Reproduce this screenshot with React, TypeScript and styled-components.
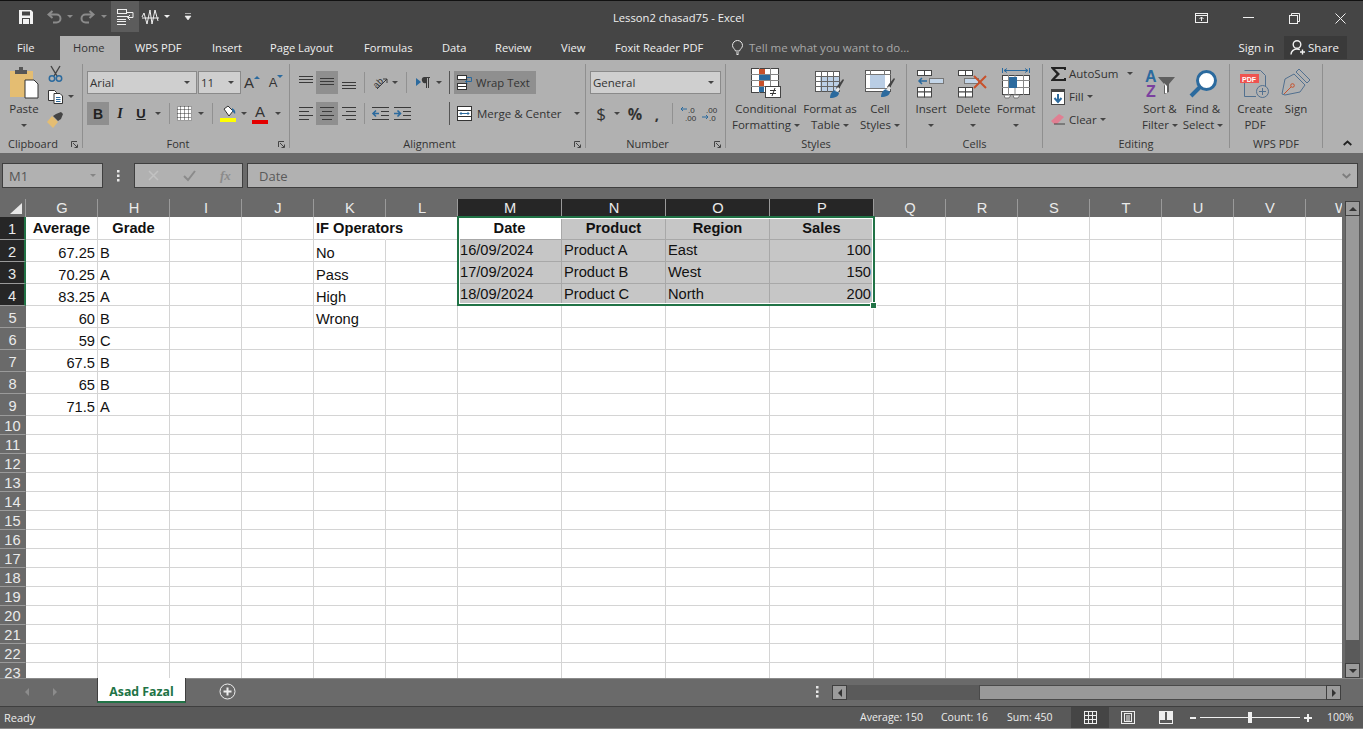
import React from "react";
import styled, { createGlobalStyle } from "styled-components";

const Global = createGlobalStyle`
  html, body { margin: 0; padding: 0; background: #6a6a6a; overflow: hidden; }
  * { box-sizing: border-box; }
  svg { display: block; flex: none; overflow: visible; }
`;
const UI = `"Open Sans", "Noto Sans", sans-serif`;
const ARIAL = `"Liberation Sans", Arial, sans-serif`;
const INK = "#2b2b2b";

const Root = styled.div`
  width: 1363px; height: 729px; display: flex; flex-direction: column; overflow: hidden;
  font-family: ${UI}; font-size: 11.5px; color: ${INK}; background: #6a6a6a;
`;
const TitleBar = styled.header`
  height: 36px; flex: none; background: #454545; border-top: 1px solid #111; display: flex; align-items: flex-start;
  color: #f0f0f0; padding-left: 15px; position: relative;
`;
const QatBtn = styled.div<{ $w: number; $on?: boolean }>`
  width: ${p => p.$w}px; height: 31px; display: flex; align-items: center; justify-content: center; flex: none;
  background: ${p => (p.$on ? "#5c5c5c" : "transparent")};
`;
const Title = styled.div`
  position: absolute; left: 613px; top: 9px; font-size: 11.2px; line-height: 16px; white-space: nowrap;
`;
const WinBtns = styled.div`margin-left: auto; display: flex;`;
const WinBtn = styled.div`width: 46px; height: 34px; display: flex; align-items: center; justify-content: center;`;

const TabRow = styled.nav`
  height: 24px; flex: none; background: #454545; display: flex; align-items: stretch; color: #f0f0f0;
`;
const RibTab = styled.div<{ $w: number; $pl?: number; $on?: boolean }>`
  width: ${p => p.$w}px; padding-left: ${p => p.$pl ?? 0}px; line-height: 23px; white-space: nowrap; flex: none;
  font-size: 11.15px;
  background: ${p => (p.$on ? "#b1b1b1" : "transparent")}; color: ${p => (p.$on ? "#333" : "#f0f0f0")};
`;
const TellMe = styled.div`
  display: flex; align-items: center; gap: 6px; color: #a8a8a8; font-size: 11.5px; width: 500px; height: 23px;
  flex: none; white-space: nowrap;
`;
const TabEnd = styled.div`margin-left: auto; display: flex; align-items: center; height: 23px; padding-right: 16px;`;
const SignIn = styled.div`margin-right: 10px; white-space: nowrap;`;
const ShareBtn = styled.div`
  width: 63px; height: 23px; background: #3a3a3a; display: flex; align-items: center; gap: 2px; padding-left: 6px; white-space: nowrap;
`;

const Ribbon = styled.section`
  height: 93px; flex: none; background: #b1b1b1; display: flex; padding-top: 4px;
`;
const Group = styled.div<{ $w: number }>`
  width: ${p => p.$w}px; height: 84px; flex: none; border-right: 1px solid #8f8f8f; display: flex; flex-direction: column;
`;
const Body = styled.div<{ $pl?: number }>`height: 72px; flex: none; display: flex; padding-left: ${p => p.$pl ?? 0}px;`;
const Stack = styled.div<{ $pl?: number }>`
  height: 72px; flex: none; display: flex; flex-direction: column; padding-top: 7px; gap: 8px; padding-left: ${p => p.$pl ?? 0}px;
`;
const Foot = styled.div`height: 16px; flex: none; display: flex; align-items: center; line-height: 16px;`;
const FootText = styled.div`flex: 1; text-align: center; font-size: 11px; color: #333; white-space: nowrap;`;
const Launcher = styled.div`width: 16px; flex: none; display: flex; justify-content: flex-start; padding-left: 5px;`;

const Row = styled.div`height: 23px; display: flex; align-items: center; flex: none;`;
const Slot = styled.div<{ $w: number; $on?: boolean }>`
  width: ${p => p.$w}px; height: 23px; flex: none; display: flex; align-items: center; justify-content: center;
  background: ${p => (p.$on ? "#8f8f8f" : "transparent")};
`;
const Sep = styled.div`width: 1px; height: 21px; background: #919191;`;
const TallSep = styled.div`width: 1px; height: 23px; background: #555;`;
const Caret = styled.i<{ $c?: string; $ml?: number }>`
  display: inline-block; width: 0; height: 0; flex: none; border-left: 3px solid transparent; border-right: 3px solid transparent;
  border-top: 3px solid ${p => p.$c ?? "#444"}; margin-left: ${p => p.$ml ?? 0}px; vertical-align: middle;
`;
const Combo = styled.div<{ $w: number }>`
  width: ${p => p.$w}px; height: 23px; flex: none; background: #cfcfcf; border: 1px solid #8a8a8a; display: flex; align-items: center;
  justify-content: space-between; padding: 0 6px 0 2px; font-size: 11.5px; color: #333;
`;
const Gap = styled.div<{ $w: number }>`width: ${p => p.$w}px; flex: none;`;
const FaceB = styled.span`font: bold 14px ${ARIAL}; color: #222;`;
const FaceI = styled.span`font: italic bold 14px "Liberation Serif", serif; color: #222;`;
const FaceU = styled.span`font: bold 13px ${ARIAL}; color: #222; text-decoration: underline;`;
const NumSign = styled.span<{ $s?: number; $bold?: boolean }>`
  font: ${p => (p.$bold ? "700 " : "")}${p => p.$s ?? 15}px ${UI}; color: #333; line-height: 20px;
`;
const StepBox = styled.div`display: flex; align-items: flex-start; height: 18px;`;
const StepA = styled.span<{ $s: number }>`font: ${p => p.$s}px/18px ${ARIAL}; color: #333;`;
const WrapBtn = styled.div`
  width: 82px; height: 23px; flex: none; background: #8f8f8f; display: flex; align-items: center; gap: 4px; padding-left: 3px; white-space: nowrap; color: #333;
  font-size: 11.3px;
`;
const MergeBtn = styled.div`display: flex; align-items: center; gap: 5px; padding-left: 5px; white-space: nowrap; color: #333;`;
const ColorBox = styled.div`width: 16px; display: flex; flex-direction: column; align-items: center; height: 20px;`;
const ColorA = styled.span`font: 15px/16px ${ARIAL}; color: #333; height: 16px;`;
const ColorBar = styled.div<{ $c: string }>`width: 16px; height: 4px; background: ${p => p.$c};`;

const Big = styled.div<{ $w: number }>`
  width: ${p => p.$w}px; flex: none; display: flex; flex-direction: column; align-items: center; height: 72px; line-height: 16px;
  white-space: nowrap; color: #333;
`;
const BigIcon = styled.div`height: 37px; display: flex; align-items: flex-end; justify-content: center; padding-bottom: 3px;`;
const BigLine = styled.div`height: 16px; display: flex; align-items: center; gap: 3px;`;
const Column = styled.div<{ $w: number }>`width: ${p => p.$w}px; flex: none; display: flex; flex-direction: column; margin-top: -2px;`;
const ToolRow = styled.div`height: 23px; display: flex; align-items: center; white-space: nowrap; color: #333;`;
const ToolIcon = styled.div`width: 22px; flex: none; display: flex; justify-content: center;`;
const Collapse = styled.div`flex: 1; height: 84px; display: flex; align-items: flex-end; padding: 0 0 2px 20px;`;

const FormulaBar = styled.div`
  height: 46px; flex: none; background: #6a6a6a; padding: 10px 5px 0 2px; display: flex; align-items: flex-start;
`;
const NameBox = styled.div`
  width: 101px; height: 25px; background: #b1b1b1; border: 1px solid #3f3f3f; display: flex; align-items: center; justify-content: space-between;
  padding: 0 6px 0 6px; color: #555; font-size: 13px;
`;
const Kebab = styled.div`width: 31px; height: 25px; display: flex; align-items: center; justify-content: center;`;
const FxBox = styled.div`
  width: 109px; height: 25px; background: #b1b1b1; border: 1px solid #3f3f3f; display: flex; align-items: center; padding-left: 13px; gap: 24px;
  color: #8b8b8b; margin-right: 4px;
`;
const FxText = styled.span`font: italic bold 13px "Liberation Serif", serif; color: #8b8b8b;`;
const FormulaInput = styled.div`
  flex: 1; height: 25px; background: #b1b1b1; border: 1px solid #3f3f3f; display: flex; align-items: center; justify-content: space-between;
  padding: 0 6px 0 11px; color: #5a5a5a; font-size: 13px;
`;

const SheetRow = styled.div`height: 479px; flex: none; display: flex; background: #6a6a6a;`;
const GridWrap = styled.div`width: 1342px; height: 479px; position: relative; overflow: hidden; flex: none;`;
const Grid = styled.div`
  display: grid; width: 1378px;
  grid-template-columns: 26px repeat(6, 72px) repeat(4, 104px) repeat(7, 72px);
  grid-template-rows: 18px 23px repeat(8, 22px) repeat(14, 19px);
  font: 14.67px ${ARIAL}; color: #111;
`;
const Corner = styled.div`background: #6a6a6a; border-right: 1px solid #9a9a9a; display: flex; justify-content: flex-end; align-items: flex-end; padding: 0 3px 3px 0;`;
const ColHead = styled.div<{ $sel?: boolean }>`
  background: ${p => (p.$sel ? "#262626" : "#6a6a6a")}; color: #eaeaea; border-right: 1px solid #9a9a9a; text-align: center; line-height: 18px; font-size: 14.67px;
  padding-left: 1px;
`;
const RowHead = styled.div<{ $sel?: boolean; $pt: number }>`
  background: ${p => (p.$sel ? "#262626" : "#6a6a6a")}; color: #eaeaea; border-bottom: 1px solid #9a9a9a; text-align: center;
  border-right: ${p => (p.$sel ? "2px solid #217346" : "1px solid #6a6a6a")}; line-height: 19px; font-size: 14.67px; padding-top: ${p => p.$pt}px; overflow: hidden;
`;
const Cell = styled.div<{ $align?: string; $bold?: boolean; $sel?: boolean; $white?: boolean; $over?: boolean; $pt: number }>`
  background: ${p => (p.$sel && !p.$white ? "#c6c6c6" : "#fff")};
  border-right: 1px solid ${p => (p.$over ? "transparent" : p.$sel ? "#a8a8a8" : "#d4d4d4")};
  border-bottom: 1px solid ${p => (p.$sel ? "#a8a8a8" : "#d4d4d4")};
  text-align: ${p => p.$align ?? "left"}; font-weight: ${p => (p.$bold ? 700 : 400)};
  padding: ${p => p.$pt}px 2px 0; line-height: 21px; white-space: nowrap;
  overflow: visible; ${p => (p.$over ? "position: relative; z-index: 1;" : "")}
`;
const Selection = styled.div`
  position: absolute; z-index: 2; left: 457px; top: 17px; width: 418px; height: 90px; border: 2px solid #217346;
  box-shadow: inset 0 0 0 1px #fff; pointer-events: none;
`;
const Handle = styled.div`position: absolute; right: -3px; bottom: -4px; width: 5px; height: 5px; background: #217346; outline: 1px solid #fff;`;

const VScroll = styled.div`width: 15px; margin-left: 3px; height: 477px; margin-top: 2px; display: flex; flex-direction: column; flex: none;`;
const VBtn = styled.div`height: 15px; flex: none; background: #9b9b9b; border: 1px solid #3f3f3f; display: flex; align-items: center; justify-content: center;`;
const VThumb = styled.div`height: 424px; background: #999; flex: none; border-left: 1px solid #5a5a5a; border-right: 1px solid #5a5a5a;`;
const VTrack = styled.div`flex: 1; background: #5a5a5a;`;

const SheetBar = styled.div`
  height: 29px; flex: none; background: #6a6a6a; border-bottom: 1px solid #3f3f3f; display: flex; align-items: flex-start; border-top: 1px solid #8a8a8a;
`;
const Nav = styled.div`width: 97px; height: 25px; display: flex; align-items: center; padding-left: 24px; gap: 22px; flex: none;`;
const SheetTab = styled.div`
  width: 89px; height: 25px; margin-top: -1px; background: #fff; border-bottom: 2px solid #217346; border-left: 1px solid #3f3f3f; border-right: 1px solid #3f3f3f;
  text-align: center; font-weight: 700; color: #217346; font-size: 12.3px; line-height: 27px; flex: none; white-space: nowrap;
`;
const AddSlot = styled.div`width: 82px; height: 25px; display: flex; align-items: center; justify-content: center; flex: none;`;
const BarDots = styled.div`margin-left: auto; width: 30px; height: 25px; display: flex; align-items: center; justify-content: center; flex: none;`;
const HScroll = styled.div`width: 509px; height: 15px; margin: 6px 22px 0 0; flex: none; display: flex; background: #5a5a5a;`;
const HBtn = styled.div`width: 15px; height: 15px; background: #9b9b9b; border: 1px solid #3f3f3f; display: flex; align-items: center; justify-content: center; flex: none;`;
const HTrack = styled.div`width: 132px; flex: none;`;
const HThumb = styled.div`flex: 1; background: #999; border-top: 1px solid #4a4a4a; border-bottom: 1px solid #4a4a4a; border-left: 1px solid #4a4a4a;`;

const StatusBar = styled.footer`
  height: 22px; flex: none; background: #595959; border-bottom: 1px solid #8a8a8a; display: flex; align-items: stretch; color: #ececec; font-size: 11px; line-height: 21px;
`;
const Ready = styled.div`padding-left: 4px; width: 860px; flex: none;`;
const Stat = styled.div<{ $w: number }>`width: ${p => p.$w}px; flex: none; white-space: nowrap; font-size: 10.5px;`;
const ViewBtn = styled.div<{ $on?: boolean }>`
  width: 38px; flex: none; display: flex; align-items: center; justify-content: center; background: ${p => (p.$on ? "#454545" : "transparent")};
`;
const ZoomGlyph = styled.div<{ $w: number }>`width: ${p => p.$w}px; flex: none; display: flex; align-items: center; justify-content: center;`;
const Slider = styled.div`width: 100px; flex: none; position: relative; display: flex; align-items: center;`;
const SliderLine = styled.div`width: 100%; height: 1px; background: #f0f0f0;`;
const SliderThumb = styled.div`position: absolute; left: 48px; top: 5px; width: 4px; height: 11px; background: #f0f0f0;`;
const Percent = styled.div`flex: none; padding-left: 11px; white-space: nowrap; font-size: 10.5px;`;

/* ---- icons ---- */
const D = "#3a3a3a";
const B = "#2b6a9e";
const SaveIcon = () => (
  <svg width="14" height="14" viewBox="0 0 14 14"><path d="M0 0h12l2 2v12H0z" fill="#f2f2f2" /><rect x="3" y="1.5" width="8" height="4" fill="#454545" /><rect x="3" y="8" width="8" height="6" fill="#454545" /><rect x="4" y="9" width="6" height="5" fill="#f2f2f2" /></svg>
);
const UndoIcon = ({ flip }: { flip?: boolean }) => (
  <svg width="15" height="13" viewBox="0 0 15 13" style={flip ? { transform: "scaleX(-1)" } : undefined}><path d="M5.5 1 1.5 4.5l4 3.5M2 4.5h7.5a4 4 0 0 1 0 8H6" fill="none" stroke="#8b8b8b" strokeWidth="2" /></svg>
);
const WrapQat = () => (
  <svg width="17" height="16" viewBox="0 0 17 16" fill="none" stroke="#f0f0f0"><rect x=".5" y=".5" width="9" height="4" /><path d="M0 7.5h12M0 10.5h9M0 15.5h9M0 12.5h9" /><path d="M9 3.5h7v5h-5M13 6l-2.5 2.5L13 11" /></svg>
);
const ZigIcon = () => (
  <svg width="17" height="16" viewBox="0 0 17 16" fill="none" stroke="#f0f0f0"><path d="M0 8l2-4 3 11 3-14 2 14 3-14 3 11M0 9h17" /></svg>
);
const CustomizeIcon = () => (
  <svg width="6" height="8" viewBox="0 0 6 8"><path d="M0 .5h6M0 3h6L3 7z" fill="#f0f0f0" stroke="#f0f0f0" strokeWidth=".6" /></svg>
);
const RibbonOpt = () => (
  <svg width="14" height="11" viewBox="0 0 14 11" fill="none" stroke="#f0f0f0"><rect x=".5" y=".5" width="12" height="9" /><path d="M0 2.5h13" /><path d="M6.5 8V4M4.5 6l2-2 2 2" /></svg>
);
const MinIcon = () => <svg width="11" height="2" viewBox="0 0 11 2"><rect width="11" height="1" fill="#f0f0f0" /></svg>;
const RestoreIcon = () => (
  <svg width="11" height="11" viewBox="0 0 11 11" fill="none" stroke="#f0f0f0"><rect x=".5" y="2.5" width="8" height="8" /><path d="M2.5 2.5v-2h8v8h-2" /></svg>
);
const CloseIcon = () => (
  <svg width="11" height="11" viewBox="0 0 11 11"><path d="M.5.5l10 10M10.5.5l-10 10" stroke="#f0f0f0" /></svg>
);
const BulbIcon = () => (
  <svg width="11" height="14" viewBox="0 0 11 14" fill="none" stroke="#e8e8e8"><path d="M3.5 10C3 8 .5 7 .5 4.5a5 5 0 0 1 10 0C10.5 7 8 8 7.500 10zM4 12h3M4.500 13.500h2" /></svg>
);
const ShareIcon = () => (
  <svg width="16" height="15" viewBox="0 0 16 15" fill="none" stroke="#f0f0f0" strokeWidth="1.4"><circle cx="7" cy="4.500" r="3.800" /><path d="M1 14.500c0-3 2.500-5.500 6-5.500 1 0 2 .2 2.800.6M12.500 9.500v5M10 12h5" /></svg>
);
const PasteIcon = () => (
  <svg width="30" height="31" viewBox="0 0 30 31"><rect x="1" y="4" width="23" height="26" fill="#e4bd72" /><path d="M6 7V3h4V0h4v3h4v4z" fill="#565656" /><path d="M16 13h9l4 4v14H16z" fill="#fff" stroke="#333" /></svg>
);
const CutIcon = () => (
  <svg width="15" height="16" viewBox="0 0 15 16" fill="none"><path d="M3 0l6 10M12 0L6 10" stroke="#444" strokeWidth="1.4" /><circle cx="4" cy="12.500" r="2.700" stroke={B} strokeWidth="1.500" /><circle cx="11" cy="12.500" r="2.700" stroke={B} strokeWidth="1.500" /></svg>
);
const CopyIcon = () => (
  <svg width="15" height="14" viewBox="0 0 15 14" fill="#fff" stroke="#333"><path d="M.5.500h6l2 2v8h-8z" /><path d="M6 3.500h6l2.500 2.500v7.500H6z" /><path d="M8 7.500h4.500M8 9.500h4.500M8 11.500h4.500" stroke={B} /></svg>
);
const PainterIcon = () => (
  <svg width="16" height="16" viewBox="0 0 16 16"><path d="M0 10l5-6 6 6-5 6z" fill="#e4bd72" /><path d="M6 4l3-2 5-2 2 2-2 5-3 2z" fill="#444" /></svg>
);
const FontStep = ({ up }: { up?: boolean }) => (
  <StepBox>
    <StepA $s={up ? 15 : 13}>A</StepA>
    <svg width="6" height="4" viewBox="0 0 6 4" style={{ marginTop: 1 }}><path d={up ? "M0 4l3-3 3 3z" : "M0 0h6L3 3z"} fill={B} /></svg>
  </StepBox>
);
const BorderIcon = () => (
  <svg width="15" height="15" viewBox="0 0 15 15"><rect width="15" height="15" fill="#fff" /><path d="M.5.500h14v14H.5zM7.500.5v14M.5 7.500h14M3.500.5v14M11.500.5v14M.5 3.500h14M.5 11.500h14" fill="none" stroke="#222" strokeDasharray="1 1" strokeWidth=".9" /></svg>
);
const FillColorIcon = () => (
  <svg width="17" height="17" viewBox="0 0 17 17"><path d="M4 4l4-3 5 5-4 5z" fill="#fff" stroke="#333" /><path d="M12 3c2 1 4 3 3 6l-3-3z" fill={B} /><rect y="13" width="16" height="4" fill="#ffff00" /></svg>
);
const AlignLines = ({ mode, w = 14 }: { mode: "l" | "c" | "r" | "top" | "mid" | "bot"; w?: number }) => {
  const ys = mode === "top" ? [0, 3, 6] : mode === "bot" ? [6, 9, 12] : mode === "mid" ? [2, 5, 8] : [0, 4, 8, 12];
  const short = ["l", "c", "r"].includes(mode);
  return (
    <svg width={w} height="13" viewBox={`0 0 ${w} 13`}>
      {ys.map((y, i) => {
        const len = short && i % 2 ? 10 : w;
        const x = mode === "r" ? w - len : mode === "c" ? (w - len) / 2 : 0;
        return <rect key={y} x={x} y={y} width={len} height="1" fill="#3a3a3a" />;
      })}
    </svg>
  );
};
const IndentIcon = ({ inward }: { inward?: boolean }) => (
  <svg width="17" height="13" viewBox="0 0 17 13">
    <path d="M0 .5h17M0 12.500h17M9 4.500h8M9 8.500h8" stroke={D} />
    {inward
      ? <path d="M0 6.500h6M3.500 3.500l3 3-3 3" stroke={B} strokeWidth="1.600" fill="none" />
      : <path d="M1 6.500h6M4 3.500l-3 3 3 3" stroke={B} strokeWidth="1.600" fill="none" />}
  </svg>
);
const OrientIcon = () => (
  <svg width="17" height="15" viewBox="0 0 17 15"><text x="1" y="11" fontFamily={ARIAL} fontSize="9" fill="#333" transform="rotate(-45 6 8)">ab</text><path d="M5 14L15 4M15 4h-4M15 4v4" stroke={D} fill="none" /></svg>
);
const RtlIcon = () => (
  <svg width="15" height="11" viewBox="0 0 15 11"><path d="M0 1l5 4-5 4z" fill={B} /><path d="M8 0h6v1h-1v10h-1V1h-1v10h-1V6a3 3 0 0 1-2-6z" fill={D} /></svg>
);
const WrapIcon = () => (
  <svg width="15" height="15" viewBox="0 0 15 15" fill="#fff" stroke="#333"><rect x=".5" y=".5" width="9" height="4" /><rect x=".5" y="8.500" width="9" height="6" /><path d="M.5 11.500h9" /><path d="M10 2.500h4.500v4h-6M10.500 4.500l-2 2 2 2" fill="none" stroke={B} /></svg>
);
const MergeIcon = () => (
  <svg width="15" height="15" viewBox="0 0 15 15"><rect x=".5" y=".5" width="14" height="14" fill="#fff" stroke="#333" /><path d="M0 4.500h15M0 10.500h15" stroke="#333" /><path d="M3 7.500h9M4.500 6l-1.500 1.500L4.500 9M10.500 6l1.500 1.500L10.500 9" stroke={B} fill="none" /></svg>
);
const DecIcon = ({ more }: { more?: boolean }) => (
  <svg width="15" height="15" viewBox="0 0 15 15">
    <text x={more ? 4 : 7} y="6.500" fontFamily={ARIAL} fontSize="8" fill="#333">{more ? ".00" : ".0"}</text>
    <text x={more ? 7 : 4} y="14.500" fontFamily={ARIAL} fontSize="8" fill="#333">{more ? ".0" : ".00"}</text>
    {more ? <path d="M0 11h6M4 9l2 2-2 2" stroke={B} fill="none" /> : <path d="M0 3h6M2 1L0 3l2 2" stroke={B} fill="none" />}
  </svg>
);
const Launch = () => (
  <svg width="7" height="7" viewBox="0 0 7 7" fill="none" stroke="#444"><path d="M.5 6V.5H6M2 2l4 4M3.500 6.500h3v-3" /></svg>
);
const CondIcon = () => (
  <svg width="30" height="30" viewBox="0 0 30 30">
    <rect x=".5" y=".5" width="27" height="24" fill="#fff" stroke="#444" />
    <path d="M8.500 0v25M19.500 0v25M0 6.500h28M0 12.500h28M0 18.500h28" stroke="#888" />
    <rect x="8" y="1" width="6" height="5" fill="#c8512b" /><rect x="8" y="7" width="11" height="5" fill={B} /><rect x="8" y="13" width="5" height="5" fill="#c8512b" /><rect x="8" y="19" width="5" height="5" fill={B} />
    <rect x="14.500" y="18.500" width="15" height="11" fill="#fff" stroke="#444" />
    <path d="M19 22.500h6M19 25.500h6M24 20l-3 8" stroke="#333" fill="none" />
  </svg>
);
const BrushTail = ({ x = 0 }: { x?: number }) => (
  <g transform={`translate(${x} 0)`}>
    <path d="M15 27c0-5 3-8 6-8l3 3c0 3-4 5-9 5z" fill={B} />
    <path d="M21 17l2-3 5-6 1 1-4 7-2 3z" fill="#444" />
    <path d="M20 20l3-4 2 2-2 3z" fill="#e8e8e8" />
  </g>
);
const FormatTableIcon = () => (
  <svg width="30" height="27" viewBox="0 0 30 27">
    <rect x=".5" y=".5" width="24" height="20" fill="#fff" stroke="#555" />
    <rect x="5" y="5" width="19" height="15" fill="#bcd0e6" />
    <path d="M6.500 0v21M12.500 0v21M18.500 0v21M0 5.500h25M0 10.500h25M0 15.500h25" stroke="#666" />
    <BrushTail />
  </svg>
);
const CellStyleIcon = () => (
  <svg width="30" height="28" viewBox="0 0 30 28">
    <rect x=".5" y=".5" width="25" height="21" fill="#fff" stroke="#555" />
    <path d="M0 4.500h26M5.500 0v5M19.500 0v5M0 18.500h26" stroke="#777" />
    <rect x="5" y="5" width="15" height="13" fill="#b9cde4" />
    <BrushTail x={1} />
  </svg>
);
const SmallTable = ({ x, y, r = 1 }: { x: number; y: number; r?: number }) => (
  <g fill="#fff" stroke="#444">
    <rect x={x + .5} y={y + .5} width="7" height={r === 2 ? 4.500 : 5} />
    <rect x={x + 7.500} y={y + .5} width="7" height={r === 2 ? 4.500 : 5} />
    {r === 2 && <><rect x={x + .5} y={y + 5} width="7" height="5" /><rect x={x + 7.500} y={y + 5} width="7" height="5" /></>}
  </g>
);
const InsertIcon = () => (
  <svg width="28" height="28" viewBox="0 0 28 28">
    <SmallTable x={0} y={0} /><SmallTable x={0} y={17} r={2} />
    <rect x="12.500" y="8.500" width="14" height="5" fill="#c3d5e8" stroke="#777" />
    <path d="M10 11H2M5 8l-3 3 3 3" stroke={B} strokeWidth="1.500" fill="none" />
  </svg>
);
const DeleteIcon = () => (
  <svg width="30" height="28" viewBox="0 0 30 28">
    <SmallTable x={0} y={0} /><SmallTable x={0} y={17} r={2} />
    <rect x="6.500" y="8.500" width="14" height="5" fill="#c3d5e8" stroke="#777" />
    <path d="M16 6l12 12M28 6L16 18" stroke="#c8512b" strokeWidth="2" />
  </svg>
);
const FormatCellIcon = () => (
  <svg width="28" height="30" viewBox="0 0 28 30">
    <path d="M.5 0v5M27.500 0v5M2 2.500h24M5 .5l-3 2 3 2M23 .5l3 2-3 2" stroke={B} fill="none" />
    <rect x=".5" y="7.500" width="27" height="19" fill="#fff" stroke="#444" />
    <path d="M6.500 7v20M21.500 7v20M13 7v20M0 12.500h28M0 19.500h28" stroke="#888" />
    <rect x="7" y="9" width="8" height="11" fill={B} />
    <path d="M2 27h7l-2 3H3zM11 27h7l-2 3h-4z" fill="#fff" stroke="#777" />
  </svg>
);
const SigmaIcon = () => <svg width="15" height="14" viewBox="0 0 15 14"><path d="M0 0h15v3h-2V2H4l5 5-5 5h9v-1h2v3H0v-1l5.500-6L0 1z" fill="#222" /></svg>;
const FillDownIcon = () => (
  <svg width="14" height="16" viewBox="0 0 14 16"><rect x=".5" y=".5" width="13" height="15" fill="#fff" stroke="#444" /><rect width="14" height="3" fill="#444" /><path d="M7 5v8M3.500 9L7 13l3.500-4" stroke={B} strokeWidth="2" fill="none" /></svg>
);
const EraserIcon = () => (
  <svg width="14" height="13" viewBox="0 0 14 13"><path d="M0 8l8-7 5 3-7 7H3z" fill="#e07f92" /><path d="M3 11h11" stroke="#444" /></svg>
);
const SortIcon = () => (
  <svg width="30" height="29" viewBox="0 0 30 29">
    <text x="0" y="13" fontFamily={ARIAL} fontSize="16" fontWeight="700" fill={B}>A</text>
    <text x="1" y="28" fontFamily={ARIAL} fontSize="16" fontWeight="700" fill="#7a3f9f">Z</text>
    <path d="M13 8h17l-6 7v8l-5 2V15z" fill="#5f5f5f" /><path d="M19 14l3 3v7h-2v-7z" fill="#fff" />
  </svg>
);
const FindIcon = () => (
  <svg width="28" height="28" viewBox="0 0 28 28"><circle cx="17.500" cy="10.500" r="9" fill="#fff" stroke={B} strokeWidth="3" /><path d="M11 17l-9 9" stroke={B} strokeWidth="4" /></svg>
);
const PdfIcon = () => (
  <svg width="30" height="28" viewBox="0 0 30 28">
    <path d="M4.500 .5h16l5 5v11M16 26.500H4.500V10" fill="none" stroke="#52708f" />
    <rect x="0" y="4" width="19" height="9" fill="#ef5350" />
    <text x="2" y="11.500" fontFamily={ARIAL} fontSize="7" fontWeight="700" fill="#fff">PDF</text>
    <circle cx="22.500" cy="21.500" r="6" fill="none" stroke="#52708f" />
    <path d="M22.500 18v7M19 21.500h7" stroke="#52708f" />
  </svg>
);
const PenIcon = () => (
  <svg width="30" height="30" viewBox="0 0 30 30" fill="none" stroke="#52708f">
    <path d="M18 1l11 11-3 3-11-11z" /><path d="M13 6l11 11-5 7-15 3L1 26l3-15z" />
    <path d="M3 26l7-7" stroke="#c8512b" /><circle cx="11.500" cy="17.500" r="1.800" stroke="#c8512b" />
  </svg>
);
const Triangle = ({ dir, c = "#333" }: { dir: "u" | "d" | "l" | "r"; c?: string }) => {
  const d = { u: "M0 5l4-4 4 4z", d: "M0 1h8L4 5z", l: "M5 0v8L1 4z", r: "M1 0v8l4-4z" }[dir];
  return <svg width={dir === "u" || dir === "d" ? 8 : 6} height={dir === "u" || dir === "d" ? 6 : 8} viewBox={dir === "u" || dir === "d" ? "0 0 8 6" : "0 0 6 8"}><path d={d} fill={c} /></svg>;
};
const Dots = ({ c = "#e8e8e8" }: { c?: string }) => (
  <svg width="3" height="12" viewBox="0 0 3 12" fill={c}><rect y="0" width="2.500" height="2.500" /><rect y="4.500" width="2.500" height="2.500" /><rect y="9" width="2.500" height="2.500" /></svg>
);
const AddIcon = () => (
  <svg width="17" height="17" viewBox="0 0 17 17" fill="none" stroke="#eee"><circle cx="8.500" cy="8.500" r="7.500" /><path d="M8.500 4.500v8M4.500 8.500h8" strokeWidth="2" /></svg>
);
const NormalIcon = () => (
  <svg width="13" height="13" viewBox="0 0 13 13" fill="none" stroke="#eee"><rect x=".5" y=".5" width="12" height="12" /><path d="M4.500 0v13M8.500 0v13M0 4.500h13M0 8.500h13" /></svg>
);
const LayoutIcon = () => (
  <svg width="14" height="13" viewBox="0 0 14 13" fill="none" stroke="#eee"><rect x=".5" y=".5" width="13" height="12" /><rect x="3.500" y="2.500" width="7" height="8" /><path d="M5 5h4M5 7h4M5 9h4" /></svg>
);
const BreakIcon = () => (
  <svg width="14" height="13" viewBox="0 0 14 13"><rect x=".5" y=".5" width="13" height="12" fill="none" stroke="#eee" /><rect x="1" y="0" width="5" height="9" fill="#eee" /><rect x="8" y="0" width="5" height="9" fill="#eee" /></svg>
);
const FxCross = () => <svg width="11" height="11" viewBox="0 0 11 11"><path d="M1 1l9 9M10 1l-9 9" stroke="#c2c2c2" strokeWidth="1.500" /></svg>;
const FxCheck = () => <svg width="13" height="11" viewBox="0 0 13 11"><path d="M1 6l4 4 7-9" fill="none" stroke="#8b8b8b" strokeWidth="2" /></svg>;
const Chevron = ({ c = "#222", down }: { c?: string; down?: boolean }) => (
  <svg width="9" height="6" viewBox="0 0 9 6" style={down ? { transform: "scaleY(-1)" } : undefined}><path d="M.7 5l3.800-3.500L8.300 5" fill="none" stroke={c} strokeWidth="1.800" /></svg>
);
const CornerTri = () => <svg width="12" height="11" viewBox="0 0 12 11"><path d="M12 0v11H0z" fill="#e8e8e8" /></svg>;

/* ---- data ---- */
const COLS = ["G", "H", "I", "J", "K", "L", "M", "N", "O", "P", "Q", "R", "S", "T", "U", "V", "W"];
const SEL = ["M", "N", "O", "P"];
type C = { t: string; a?: string; b?: boolean };
const data: Record<string, C> = {
  G1: { t: "Average", a: "center", b: true }, H1: { t: "Grade", a: "center", b: true }, K1: { t: "IF Operators", b: true },
  G2: { t: "67.25", a: "right" }, G3: { t: "70.25", a: "right" }, G4: { t: "83.25", a: "right" }, G5: { t: "60", a: "right" }, G6: { t: "59", a: "right" }, G7: { t: "67.5", a: "right" }, G8: { t: "65", a: "right" }, G9: { t: "71.5", a: "right" },
  H2: { t: "B" }, H3: { t: "A" }, H4: { t: "A" }, H5: { t: "B" }, H6: { t: "C" }, H7: { t: "B" }, H8: { t: "B" }, H9: { t: "A" },
  K2: { t: "No" }, K3: { t: "Pass" }, K4: { t: "High" }, K5: { t: "Wrong" },
  M1: { t: "Date", a: "center", b: true }, N1: { t: "Product", a: "center", b: true }, O1: { t: "Region", a: "center", b: true }, P1: { t: "Sales", a: "center", b: true },
  M2: { t: "16/09/2024" }, M3: { t: "17/09/2024" }, M4: { t: "18/09/2024" },
  N2: { t: "Product A" }, N3: { t: "Product B" }, N4: { t: "Product C" },
  O2: { t: "East" }, O3: { t: "West" }, O4: { t: "North" },
  P2: { t: "100", a: "right" }, P3: { t: "150", a: "right" }, P4: { t: "200", a: "right" },
};
const rows = Array.from({ length: 23 }, (_, i) => i + 1);

const Foots = ({ label, launch }: { label: string; launch?: boolean }) => (
  <Foot><FootText>{label}</FootText>{launch && <Launcher><Launch /></Launcher>}</Foot>
);

export default function App() {
  return (
    <Root>
      <Global />
      <TitleBar>
        <QatBtn $w={22}><SaveIcon /></QatBtn>
        <QatBtn $w={8} />
        <QatBtn $w={18}><UndoIcon /></QatBtn>
        <QatBtn $w={14}><Caret $c="#8b8b8b" /></QatBtn>
        <QatBtn $w={20}><UndoIcon flip /></QatBtn>
        <QatBtn $w={14}><Caret $c="#8b8b8b" /></QatBtn>
        <QatBtn $w={28} $on><WrapQat /></QatBtn>
        <QatBtn $w={22}><ZigIcon /></QatBtn>
        <QatBtn $w={12}><Caret $c="#f0f0f0" /></QatBtn>
        <QatBtn $w={30}><CustomizeIcon /></QatBtn>
        <Title>Lesson2 chasad75 - Excel</Title>
        <WinBtns>
          <WinBtn><RibbonOpt /></WinBtn>
          <WinBtn><MinIcon /></WinBtn>
          <WinBtn><RestoreIcon /></WinBtn>
          <WinBtn><CloseIcon /></WinBtn>
        </WinBtns>
      </TitleBar>

      <TabRow>
        <RibTab $w={60} $pl={17}>File</RibTab>
        <RibTab $w={60} $pl={13} $on>Home</RibTab>
        <RibTab $w={92} $pl={15}>WPS PDF</RibTab>
        <RibTab $w={58}>Insert</RibTab>
        <RibTab $w={94}>Page Layout</RibTab>
        <RibTab $w={78}>Formulas</RibTab>
        <RibTab $w={53}>Data</RibTab>
        <RibTab $w={66}>Review</RibTab>
        <RibTab $w={54}>View</RibTab>
        <RibTab $w={117}>Foxit Reader PDF</RibTab>
        <TellMe><BulbIcon />Tell me what you want to do...</TellMe>
        <TabEnd>
          <SignIn>Sign in</SignIn>
          <ShareBtn><ShareIcon />Share</ShareBtn>
        </TabEnd>
      </TabRow>

      <Ribbon>
        <Group $w={83}>
          <Body $pl={4}>
            <Big $w={40}>
              <BigIcon><PasteIcon /></BigIcon>
              <BigLine>Paste</BigLine>
              <BigLine><Caret /></BigLine>
            </Big>
            <Column $w={32}>
              <ToolRow><ToolIcon><CutIcon /></ToolIcon></ToolRow>
              <ToolRow><ToolIcon><CopyIcon /></ToolIcon><Caret $ml={2} /></ToolRow>
              <ToolRow><ToolIcon><PainterIcon /></ToolIcon></ToolRow>
            </Column>
          </Body>
          <Foots label="Clipboard" launch />
        </Group>

        <Group $w={207}>
          <Stack $pl={4}>
            <Row>
              <Combo $w={110}>Arial<Caret /></Combo>
              <Gap $w={1} />
              <Combo $w={43}>11<Caret /></Combo>
              <Slot $w={22}><FontStep up /></Slot>
              <Slot $w={26}><FontStep /></Slot>
            </Row>
            <Row>
              <Slot $w={22} $on><FaceB>B</FaceB></Slot>
              <Slot $w={22}><FaceI>I</FaceI></Slot>
              <Slot $w={20}><FaceU>U</FaceU></Slot>
              <Slot $w={14}><Caret /></Slot>
              <Slot $w={8}><Sep /></Slot>
              <Slot $w={22}><BorderIcon /></Slot>
              <Slot $w={12}><Caret /></Slot>
              <Slot $w={10}><Sep /></Slot>
              <Slot $w={22}><FillColorIcon /></Slot>
              <Slot $w={10}><Caret /></Slot>
              <Slot $w={22}><ColorBox><ColorA>A</ColorA><ColorBar $c="#e40000" /></ColorBox></Slot>
              <Slot $w={14}><Caret /></Slot>
            </Row>
          </Stack>
          <Foots label="Font" launch />
        </Group>

        <Group $w={296}>
          <Stack $pl={5}>
            <Row>
              <Slot $w={21}><AlignLines mode="top" /></Slot>
              <Slot $w={22} $on><AlignLines mode="mid" /></Slot>
              <Slot $w={22}><AlignLines mode="bot" /></Slot>
              <Slot $w={8}><Sep /></Slot>
              <Slot $w={24}><OrientIcon /></Slot>
              <Slot $w={6}><Caret /></Slot>
              <Slot $w={16}><Sep /></Slot>
              <Slot $w={18}><RtlIcon /></Slot>
              <Slot $w={14}><Caret /></Slot>
              <Slot $w={6}><TallSep /></Slot>
              <Gap $w={2} />
              <WrapBtn><WrapIcon />Wrap Text</WrapBtn>
            </Row>
            <Row>
              <Slot $w={21}><AlignLines mode="l" /></Slot>
              <Slot $w={22} $on><AlignLines mode="c" /></Slot>
              <Slot $w={22}><AlignLines mode="r" /></Slot>
              <Slot $w={8}><Sep /></Slot>
              <Slot $w={24}><IndentIcon /></Slot>
              <Slot $w={20}><IndentIcon inward /></Slot>
              <Gap $w={34} />
              <Slot $w={6}><TallSep /></Slot>
              <MergeBtn><MergeIcon />Merge &amp; Center<Caret $ml={7} /></MergeBtn>
            </Row>
          </Stack>
          <Foots label="Alignment" launch />
        </Group>

        <Group $w={140}>
          <Stack $pl={4}>
            <Row><Combo $w={131}>General<Caret /></Combo></Row>
            <Row>
              <Slot $w={22}><NumSign $s={17}>$</NumSign></Slot>
              <Slot $w={10}><Caret /></Slot>
              <Slot $w={26}><NumSign $s={16} $bold>%</NumSign></Slot>
              <Slot $w={18}><NumSign $s={15} $bold>,</NumSign></Slot>
              <Slot $w={12}><Sep /></Slot>
              <Slot $w={20}><DecIcon /></Slot>
              <Slot $w={22}><DecIcon more /></Slot>
            </Row>
          </Stack>
          <Foots label="Number" launch />
        </Group>

        <Group $w={181}>
          <Body $pl={2}>
            <Big $w={76}>
              <BigIcon><CondIcon /></BigIcon>
              <BigLine>Conditional</BigLine>
              <BigLine>Formatting<Caret /></BigLine>
            </Big>
            <Big $w={52}>
              <BigIcon><FormatTableIcon /></BigIcon>
              <BigLine>Format as</BigLine>
              <BigLine>Table<Caret /></BigLine>
            </Big>
            <Big $w={48}>
              <BigIcon><CellStyleIcon /></BigIcon>
              <BigLine>Cell</BigLine>
              <BigLine>Styles<Caret /></BigLine>
            </Big>
          </Body>
          <Foots label="Styles" />
        </Group>

        <Group $w={136}>
          <Body $pl={3}>
            <Big $w={42}>
              <BigIcon><InsertIcon /></BigIcon>
              <BigLine>Insert</BigLine>
              <BigLine><Caret /></BigLine>
            </Big>
            <Big $w={42}>
              <BigIcon><DeleteIcon /></BigIcon>
              <BigLine>Delete</BigLine>
              <BigLine><Caret /></BigLine>
            </Big>
            <Big $w={44}>
              <BigIcon><FormatCellIcon /></BigIcon>
              <BigLine>Format</BigLine>
              <BigLine><Caret /></BigLine>
            </Big>
          </Body>
          <Foots label="Cells" />
        </Group>

        <Group $w={187}>
          <Body $pl={4}>
            <Column $w={91}>
              <ToolRow><ToolIcon><SigmaIcon /></ToolIcon>AutoSum<Caret $ml={9} /></ToolRow>
              <ToolRow><ToolIcon><FillDownIcon /></ToolIcon>Fill<Caret $ml={3} /></ToolRow>
              <ToolRow><ToolIcon><EraserIcon /></ToolIcon>Clear<Caret $ml={3} /></ToolRow>
            </Column>
            <Big $w={44}>
              <BigIcon><SortIcon /></BigIcon>
              <BigLine>Sort &amp;</BigLine>
              <BigLine>Filter<Caret /></BigLine>
            </Big>
            <Big $w={42}>
              <BigIcon><FindIcon /></BigIcon>
              <BigLine>Find &amp;</BigLine>
              <BigLine>Select<Caret /></BigLine>
            </Big>
          </Body>
          <Foots label="Editing" />
        </Group>

        <Group $w={93}>
          <Body $pl={2}>
            <Big $w={46}>
              <BigIcon><PdfIcon /></BigIcon>
              <BigLine>Create</BigLine>
              <BigLine>PDF</BigLine>
            </Big>
            <Big $w={36}>
              <BigIcon><PenIcon /></BigIcon>
              <BigLine>Sign</BigLine>
            </Big>
          </Body>
          <Foots label="WPS PDF" />
        </Group>
        <Collapse><Chevron /></Collapse>
      </Ribbon>

      <FormulaBar>
        <NameBox>M1<Caret $c="#858585" /></NameBox>
        <Kebab><Dots /></Kebab>
        <FxBox><FxCross /><FxCheck /><FxText>fx</FxText></FxBox>
        <FormulaInput>Date<Chevron c="#7d7d7d" down /></FormulaInput>
      </FormulaBar>

      <SheetRow>
        <GridWrap>
          <Grid>
            <Corner><CornerTri /></Corner>
            {COLS.map(c => <ColHead key={c} $sel={SEL.includes(c)}>{c}</ColHead>)}
            {rows.map(r => (
              <React.Fragment key={r}>
                <RowHead $sel={r <= 4} $pt={r <= 9 ? 3 : 1}>{r}</RowHead>
                {COLS.map(c => {
                  const cell = data[`${c}${r}`];
                  const sel = SEL.includes(c) && r <= 4;
                  return (
                    <Cell key={c} $align={cell?.a} $bold={cell?.b} $sel={sel} $white={c === "M" && r === 1}
                      $over={c === "K" && r === 1} $pt={r === 1 ? 1 : sel ? 0 : 3}>
                      {cell?.t}
                    </Cell>
                  );
                })}
              </React.Fragment>
            ))}
          </Grid>
          <Selection><Handle /></Selection>
        </GridWrap>
        <VScroll>
          <VBtn><Triangle dir="u" /></VBtn>
          <VThumb />
          <VTrack />
          <VBtn><Triangle dir="d" /></VBtn>
        </VScroll>
      </SheetRow>

      <SheetBar>
        <Nav><Triangle dir="l" c="#8c8c8c" /><Triangle dir="r" c="#8c8c8c" /></Nav>
        <SheetTab>Asad Fazal</SheetTab>
        <AddSlot><AddIcon /></AddSlot>
        <BarDots><Dots /></BarDots>
        <HScroll>
          <HBtn><Triangle dir="l" /></HBtn>
          <HTrack />
          <HThumb />
          <HBtn><Triangle dir="r" /></HBtn>
        </HScroll>
      </SheetBar>

      <StatusBar>
        <Ready>Ready</Ready>
        <Stat $w={81}>Average: 150</Stat>
        <Stat $w={66}>Count: 16</Stat>
        <Stat $w={64}>Sum: 450</Stat>
        <ViewBtn $on><NormalIcon /></ViewBtn>
        <ViewBtn><LayoutIcon /></ViewBtn>
        <ViewBtn><BreakIcon /></ViewBtn>
        <ZoomGlyph $w={15}><svg width="6" height="2" viewBox="0 0 6 2"><rect width="6" height="2" fill="#f0f0f0" /></svg></ZoomGlyph>
        <Slider><SliderLine /><SliderThumb /></Slider>
        <ZoomGlyph $w={16}><svg width="8" height="8" viewBox="0 0 8 8"><path d="M3 0h2v3h3v2H5v3H3V5H0V3h3z" fill="#f0f0f0" /></svg></ZoomGlyph>
        <Percent>100%</Percent>
      </StatusBar>
    </Root>
  );
}
